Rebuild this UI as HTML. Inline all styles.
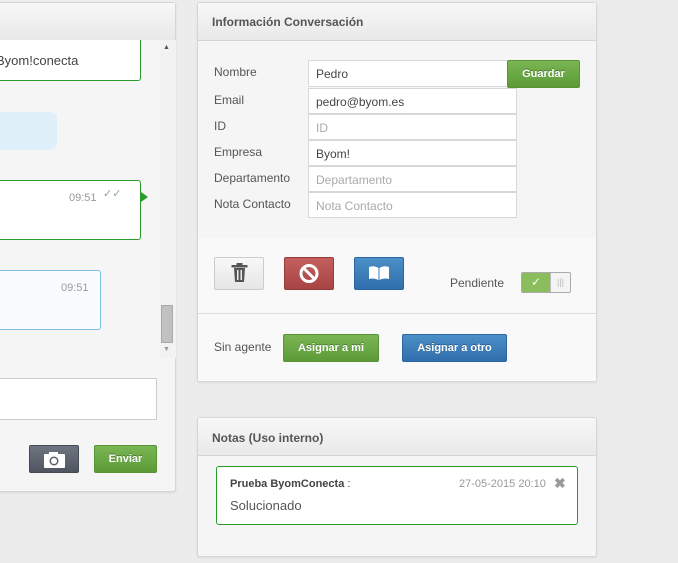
<!DOCTYPE html><html><head><style>
body{margin:0;width:678px;height:563px;overflow:hidden;background:#ececec;font-family:"Liberation Sans",sans-serif;position:relative}
.a{position:absolute;box-sizing:border-box}
.pan{background:#f5f5f5;border:1px solid #d6d6d6;border-radius:3px;box-shadow:0 1px 2px rgba(0,0,0,.08)}
.hd{background:linear-gradient(#f7f7f7,#e9e9e9);border-bottom:1px solid #d4d4d4;font-size:12px;font-weight:bold;color:#555}
.lbl{font-size:12px;color:#555}
.inp{background:#fff;border:1px solid #d8d8d8;font-size:12px;color:#444;padding:6px 7px}
.ph{color:#aaa}
.btn{border-radius:2px;color:#fff;font-size:11px;font-weight:bold;text-align:center;text-shadow:0 -1px 0 rgba(0,0,0,.3)}
.g{background:linear-gradient(#7ab653,#5c9a38);border:1px solid #5a9236}
.b{background:linear-gradient(#4c90c8,#2f6eab);border:1px solid #2c64a0}
</style></head><body>
<div class="a pan" style="left:-10px;top:2px;width:186px;height:490px">
<div class="a hd" style="left:0;top:0;width:184px;height:38px"></div>
</div>
<div class="a" style="left:0;top:40px;width:160px;height:318px;background:#f5f5f5"></div>
<div class="a" style="left:160px;top:40px;width:16px;height:318px;background:#f2f2f2"></div>
<div class="a" style="left:163px;top:44px;font-size:7px;color:#555">▲</div>
<div class="a" style="left:163px;top:346px;font-size:7px;color:#999">▼</div>
<div class="a" style="left:161px;top:305px;width:12px;height:38px;background:#c1c1c1;border:1px solid #aaa"></div>
<div class="a" style="left:-5px;top:40px;width:146px;height:41px;background:#fff;border:1px solid #2a9a2a;border-top:none;border-radius:0 0 3px 3px;font-size:13px;color:#444"><span style="position:absolute;left:0;top:13px">Byom!conecta</span></div>
<div class="a" style="left:0;top:112px;width:57px;height:38px;background:#e0f0fb;border-radius:0 6px 6px 0"></div>
<div class="a" style="left:-5px;top:180px;width:146px;height:60px;background:#fff;border:1px solid #2a9a2a;border-radius:3px"></div>
<div class="a" style="left:141px;top:192px;width:0;height:0;border-left:7px solid #2a9a2a;border-top:5px solid transparent;border-bottom:5px solid transparent"></div>
<div class="a" style="left:69px;top:192px;font-size:11px;color:#999">09:51</div>
<div class="a" style="left:103px;top:187px;font-size:11px;color:#8a8">✓✓</div>
<div class="a" style="left:-5px;top:270px;width:106px;height:60px;background:#f8fcff;border:1px solid #7ec0e0;border-radius:3px"></div>
<div class="a" style="left:61px;top:282px;font-size:11px;color:#999">09:51</div>
<div class="a" style="left:-5px;top:378px;width:162px;height:42px;background:#fff;border:1px solid #ccc"></div>
<div class="a btn" style="left:29px;top:445px;width:50px;height:28px;background:linear-gradient(#6e7580,#4f5560);border:1px solid #444a52">
<svg width="48" height="26"><rect x="14" y="8" width="21" height="14" rx="1" fill="#fff"/><rect x="19" y="6" width="9" height="3" fill="#fff"/><circle cx="24" cy="15" r="4.5" fill="#5a616b"/><circle cx="24" cy="15" r="3" fill="#fff"/></svg></div>
<div class="a btn g" style="left:94px;top:445px;width:63px;height:28px;line-height:26px">Enviar</div>
<div class="a pan" style="left:197px;top:2px;width:400px;height:380px">
<div class="a hd" style="left:0;top:0;width:398px;height:38px;padding:12px 14px">Información Conversación</div>
<div class="a" style="left:0;top:235px;width:398px;height:143px;background:#f9f9f9"></div>
<div class="a" style="left:0;top:310px;width:398px;height:1px;background:#ddd"></div>
</div>
<div class="a lbl" style="left:214px;top:65px">Nombre</div>
<div class="a lbl" style="left:214px;top:93px">Email</div>
<div class="a lbl" style="left:214px;top:119px">ID</div>
<div class="a lbl" style="left:214px;top:145px">Empresa</div>
<div class="a lbl" style="left:214px;top:171px">Departamento</div>
<div class="a lbl" style="left:214px;top:197px">Nota Contacto</div>
<div class="a inp" style="left:308px;top:60px;width:202px;height:27px">Pedro</div>
<div class="a btn g" style="left:507px;top:60px;width:73px;height:28px;line-height:26px">Guardar</div>
<div class="a inp" style="left:308px;top:88px;width:209px;height:26px">pedro@byom.es</div>
<div class="a inp ph" style="left:308px;top:114px;width:209px;height:26px">ID</div>
<div class="a inp" style="left:308px;top:140px;width:209px;height:26px">Byom!</div>
<div class="a inp ph" style="left:308px;top:166px;width:209px;height:26px">Departamento</div>
<div class="a inp ph" style="left:308px;top:192px;width:209px;height:26px">Nota Contacto</div>
<div class="a" style="left:214px;top:257px;width:50px;height:33px;background:linear-gradient(#f8f8f8,#e6e6e6);border:1px solid #ccc;border-radius:2px">
<svg width="48" height="31"><path d="M19 10 H30 L29 24 H20Z" fill="#555"/><rect x="16.5" y="7" width="16" height="2.5" fill="#555"/><rect x="21.5" y="5" width="6" height="2" fill="#555"/><rect x="22" y="12" width="1.5" height="10" fill="#eee"/><rect x="25.5" y="12" width="1.5" height="10" fill="#eee"/></svg></div>
<div class="a" style="left:284px;top:257px;width:50px;height:33px;background:linear-gradient(#c45f5f,#a84444);border:1px solid #963b3b;border-radius:2px">
<svg width="48" height="31"><circle cx="24" cy="15.5" r="8" fill="none" stroke="#fff" stroke-width="3"/><line x1="18.5" y1="10" x2="29.5" y2="21" stroke="#fff" stroke-width="3"/></svg></div>
<div class="a b" style="left:354px;top:257px;width:50px;height:33px;border-radius:2px">
<svg width="48" height="31"><path d="M14 9 Q19 7 23.5 10 V22 Q19 19.5 14 21Z M34 9 Q29 7 24.5 10 V22 Q29 19.5 34 21Z" fill="#fff"/></svg></div>
<div class="a lbl" style="left:450px;top:276px">Pendiente</div>
<div class="a" style="left:521px;top:272px;width:50px;height:21px;border:1px solid #aaa;border-radius:2px;background:#f4f4f4;overflow:hidden">
<div class="a" style="left:0;top:0;width:28px;height:19px;background:#8cbd5c;color:#fff;font-size:12px;text-align:center;line-height:19px">✓</div>
<div class="a" style="left:28px;top:0;width:20px;height:19px;border-left:1px solid #bbb;color:#bbb;font-size:9px;text-align:center;line-height:19px">|||</div></div>
<div class="a lbl" style="left:214px;top:340px">Sin agente</div>
<div class="a btn g" style="left:283px;top:334px;width:96px;height:28px;line-height:26px">Asignar a mi</div>
<div class="a btn b" style="left:402px;top:334px;width:105px;height:28px;line-height:26px">Asignar a otro</div>
<div class="a pan" style="left:197px;top:417px;width:400px;height:140px">
<div class="a hd" style="left:0;top:0;width:398px;height:38px;padding:13px 14px">Notas (Uso interno)</div>
</div>
<div class="a" style="left:216px;top:466px;width:362px;height:59px;background:#fff;border:1px solid #2a9a2a;border-radius:3px">
<div class="a" style="left:13px;top:11px;font-size:11px;color:#444"><b>Prueba ByomConecta</b> :</div>
<div class="a" style="left:242px;top:11px;font-size:11px;color:#999">27-05-2015 20:10</div>
<div class="a" style="left:337px;top:8px;font-size:14px;color:#999;font-weight:bold">✖</div>
<div class="a" style="left:13px;top:31px;font-size:13px;color:#555">Solucionado</div>
</div>
</body></html>
